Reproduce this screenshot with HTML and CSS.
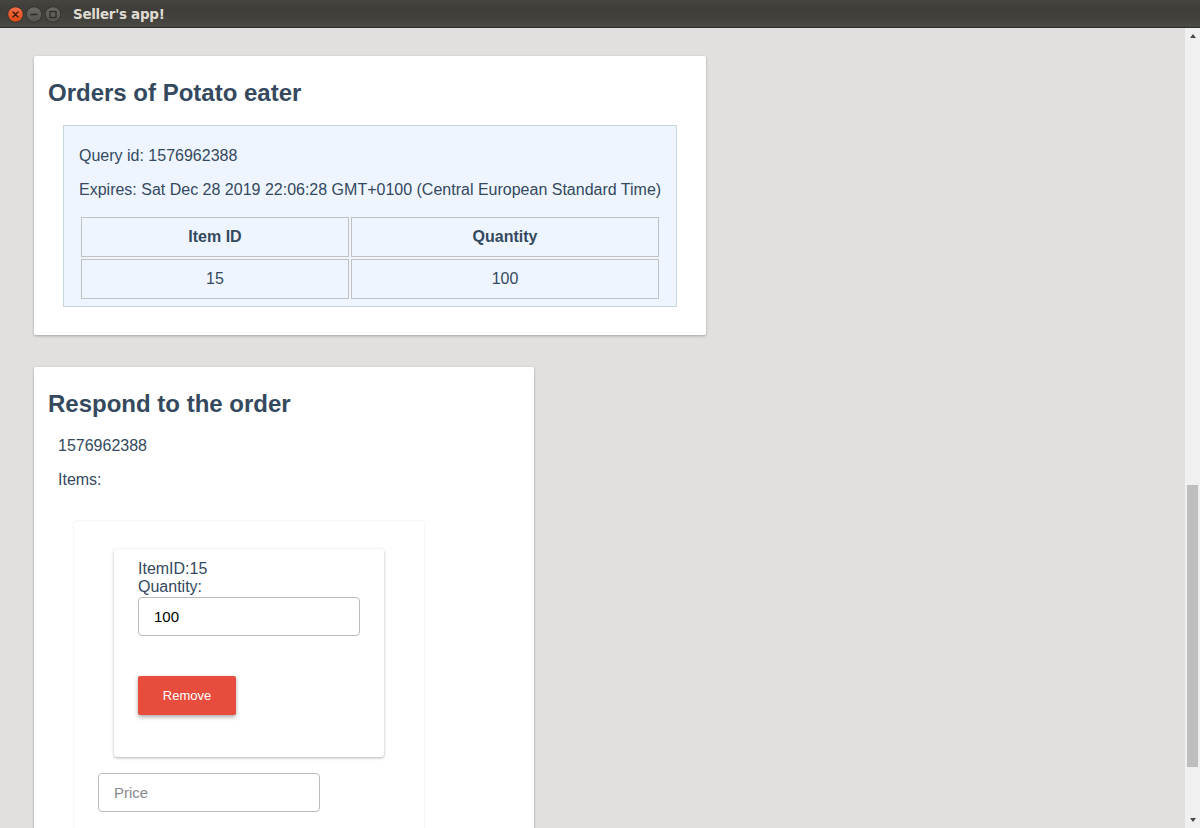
FILE: index.html
```html
<!DOCTYPE html>
<html lang="en">
<head>
<meta charset="utf-8">
<title>Seller's app!</title>
<link rel="stylesheet" href="styles.css">
</head>
<body>
<div class="window">
  <header class="titlebar">
    <svg class="controls" width="64" height="28" viewBox="0 0 64 28">
      <defs>
        <linearGradient id="gClose" x1="0" y1="0" x2="0" y2="1">
          <stop offset="0" stop-color="#f26d45"/>
          <stop offset="1" stop-color="#df4a16"/>
        </linearGradient>
        <linearGradient id="gGray" x1="0" y1="0" x2="0" y2="1">
          <stop offset="0" stop-color="#6a6964"/>
          <stop offset="1" stop-color="#55544f"/>
        </linearGradient>
      </defs>
      <circle cx="15.5" cy="14.5" r="8" fill="#2f2e2b"/>
      <circle cx="15.5" cy="14.5" r="7.3" fill="url(#gClose)"/>
      <path d="M13 12 L18 17 M18 12 L13 17" stroke="#3a1a0c" stroke-width="1.4" stroke-linecap="round"/>
      <circle cx="34" cy="14.5" r="8" fill="#2f2e2b"/>
      <circle cx="34" cy="14.5" r="7.3" fill="url(#gGray)"/>
      <path d="M30.5 14.5 H37.5" stroke="#2d2c29" stroke-width="1.5"/>
      <circle cx="53" cy="14.5" r="8" fill="#2f2e2b"/>
      <circle cx="53" cy="14.5" r="7.3" fill="url(#gGray)"/>
      <rect x="50" y="11.5" width="6" height="6" fill="none" stroke="#2d2c29" stroke-width="1.3"/>
    </svg>
    <span class="title">Seller's app!</span>
  </header>
  <div class="viewport">
    <main class="content">
      <section class="card card-orders">
        <h2 class="card-title">Orders of Potato eater</h2>
        <div class="query">
          <p class="query-line">Query id: 1576962388</p>
          <p class="query-line">Expires: Sat Dec 28 2019 22:06:28 GMT+0100 (Central European Standard Time)</p>
          <table class="items-table">
            <thead>
              <tr><th class="col-id">Item ID</th><th>Quantity</th></tr>
            </thead>
            <tbody>
              <tr><td class="col-id">15</td><td>100</td></tr>
            </tbody>
          </table>
        </div>
      </section>
      <section class="card card-respond">
        <h2 class="card-title">Respond to the order</h2>
        <div class="respond-body">
          <p class="respond-line">1576962388</p>
          <p class="respond-line">Items:</p>
          <div class="items-box">
            <div class="item-card">
              <div class="item-label">ItemID:15</div>
              <div class="item-label">Quantity:</div>
              <input class="field" type="text" value="100">
              <button class="btn-remove" type="button">Remove</button>
            </div>
            <input class="field field-price" type="text" placeholder="Price">
          </div>
        </div>
      </section>
    </main>
    <div class="scrollbar">
      <div class="arrow arrow-up"></div>
      <div class="track">
        <div class="thumb"></div>
      </div>
      <div class="arrow arrow-down"></div>
    </div>
  </div>
</div>
</body>
</html>
```

FILE: styles.css
```css
* { box-sizing: border-box; }

html, body {
  margin: 0;
  padding: 0;
  width: 1200px;
  height: 828px;
  overflow: hidden;
}

body {
  font-family: "Liberation Sans", Arial, sans-serif;
  font-size: 16px;
  color: #34495e;
  background: #e1e0de;
}

.window {
  display: flex;
  flex-direction: column;
  width: 1200px;
  height: 828px;
}

.titlebar {
  flex: 0 0 28px;
  height: 28px;
  display: flex;
  align-items: center;
  background: linear-gradient(to bottom, #45443f 0%, #3e3d39 40%, #4a4843 100%);
  border-bottom: 1px solid #2f2e2b;
}

.controls {
  display: block;
  flex: 0 0 64px;
}

.title {
  margin-left: 9px;
  font-family: "DejaVu Sans", sans-serif;
  font-weight: bold;
  font-size: 13.5px;
  letter-spacing: -0.3px;
  color: #dfdbd2;
}

.viewport {
  flex: 1 1 auto;
  display: flex;
  min-height: 0;
}

.content {
  flex: 1 1 auto;
  overflow: hidden;
  padding: 28px 0 0 34px;
  display: flex;
  flex-direction: column;
  align-items: flex-start;
  gap: 32px;
}

.card {
  flex: 0 0 auto;
  background: #fff;
  border-radius: 2px;
  box-shadow: 0 1px 3px rgba(0, 0, 0, 0.28);
  padding: 14px;
}

.card-orders { width: 672px; }
.card-respond { width: 500px; }

.card-title {
  margin: 9px 0 18px;
  font-size: 24px;
  line-height: 28px;
  font-weight: bold;
  color: #34495e;
}

.card-respond .card-title { margin-bottom: 19px; }

.query {
  margin: 0 15px 14px;
  padding: 5px 15px 5px;
  background: #eef5fe;
  border: 1px solid #c7d5e5;
}

.query-line {
  margin: 16px 0;
  white-space: nowrap;
}

.items-table {
  width: 100%;
  border-collapse: separate;
  border-spacing: 2px;
  font-size: 16px;
  color: #34495e;
}

.items-table th,
.items-table td {
  border: 1px solid #c1c1c1;
  padding: 10px 0;
  line-height: 18px;
  text-align: center;
  vertical-align: middle;
}

.items-table th { font-weight: bold; }

.items-table .col-id { width: 268px; }

.respond-body {
  padding: 0 10px;
}

.respond-line {
  margin: 16px 0;
}

.items-box {
  width: 350px;
  margin: 32px 16px 16px;
  padding: 28px 24px 60px;
  background: #fff;
  border-radius: 3px;
  box-shadow: 0 0 2px rgba(0, 0, 0, 0.14);
}

.item-card {
  margin: 0 16px;
  padding: 11px 24px 42px;
  background: #fff;
  border-radius: 3px;
  box-shadow: 0 1px 3px rgba(0, 0, 0, 0.3);
}

.item-label {
  line-height: 18.4px;
}

.field {
  display: block;
  width: 222px;
  height: 39px;
  margin: 0;
  padding: 0 15px;
  border: 1px solid #bbbbbb;
  border-radius: 4px;
  font-family: "Liberation Sans", Arial, sans-serif;
  font-size: 15px;
  color: #000;
  background: #fff;
  outline: none;
}

.field::placeholder { color: #8a8a8a; }

.item-card .field { width: 100%; }

.field-price { margin-top: 16px; }

.btn-remove {
  display: block;
  margin-top: 40px;
  width: 98px;
  height: 39px;
  padding: 0;
  border: none;
  border-radius: 2px;
  background: #e74c3c;
  color: #fff;
  font-family: "Liberation Sans", Arial, sans-serif;
  font-size: 13px;
  box-shadow: 0 2px 4px rgba(0, 0, 0, 0.35);
}

.scrollbar {
  flex: 0 0 15px;
  width: 15px;
  display: flex;
  flex-direction: column;
  background: #f0f0f0;
}

.arrow {
  flex: 0 0 14px;
  display: flex;
  align-items: center;
  justify-content: center;
}

.arrow::before {
  content: "";
  width: 0;
  height: 0;
  border-left: 3.5px solid transparent;
  border-right: 3.5px solid transparent;
}

.arrow-up::before {
  border-bottom: 4px solid #4a4a4a;
  margin-top: 2px;
}

.arrow-down::before {
  border-top: 4px solid #4a4a4a;
  margin-bottom: 2px;
}

.track {
  flex: 1 1 auto;
  padding: 443px 2px 47px 2px;
  display: flex;
  flex-direction: column;
}

.thumb {
  flex: 1 1 auto;
  background: #bebebe;
}
```
